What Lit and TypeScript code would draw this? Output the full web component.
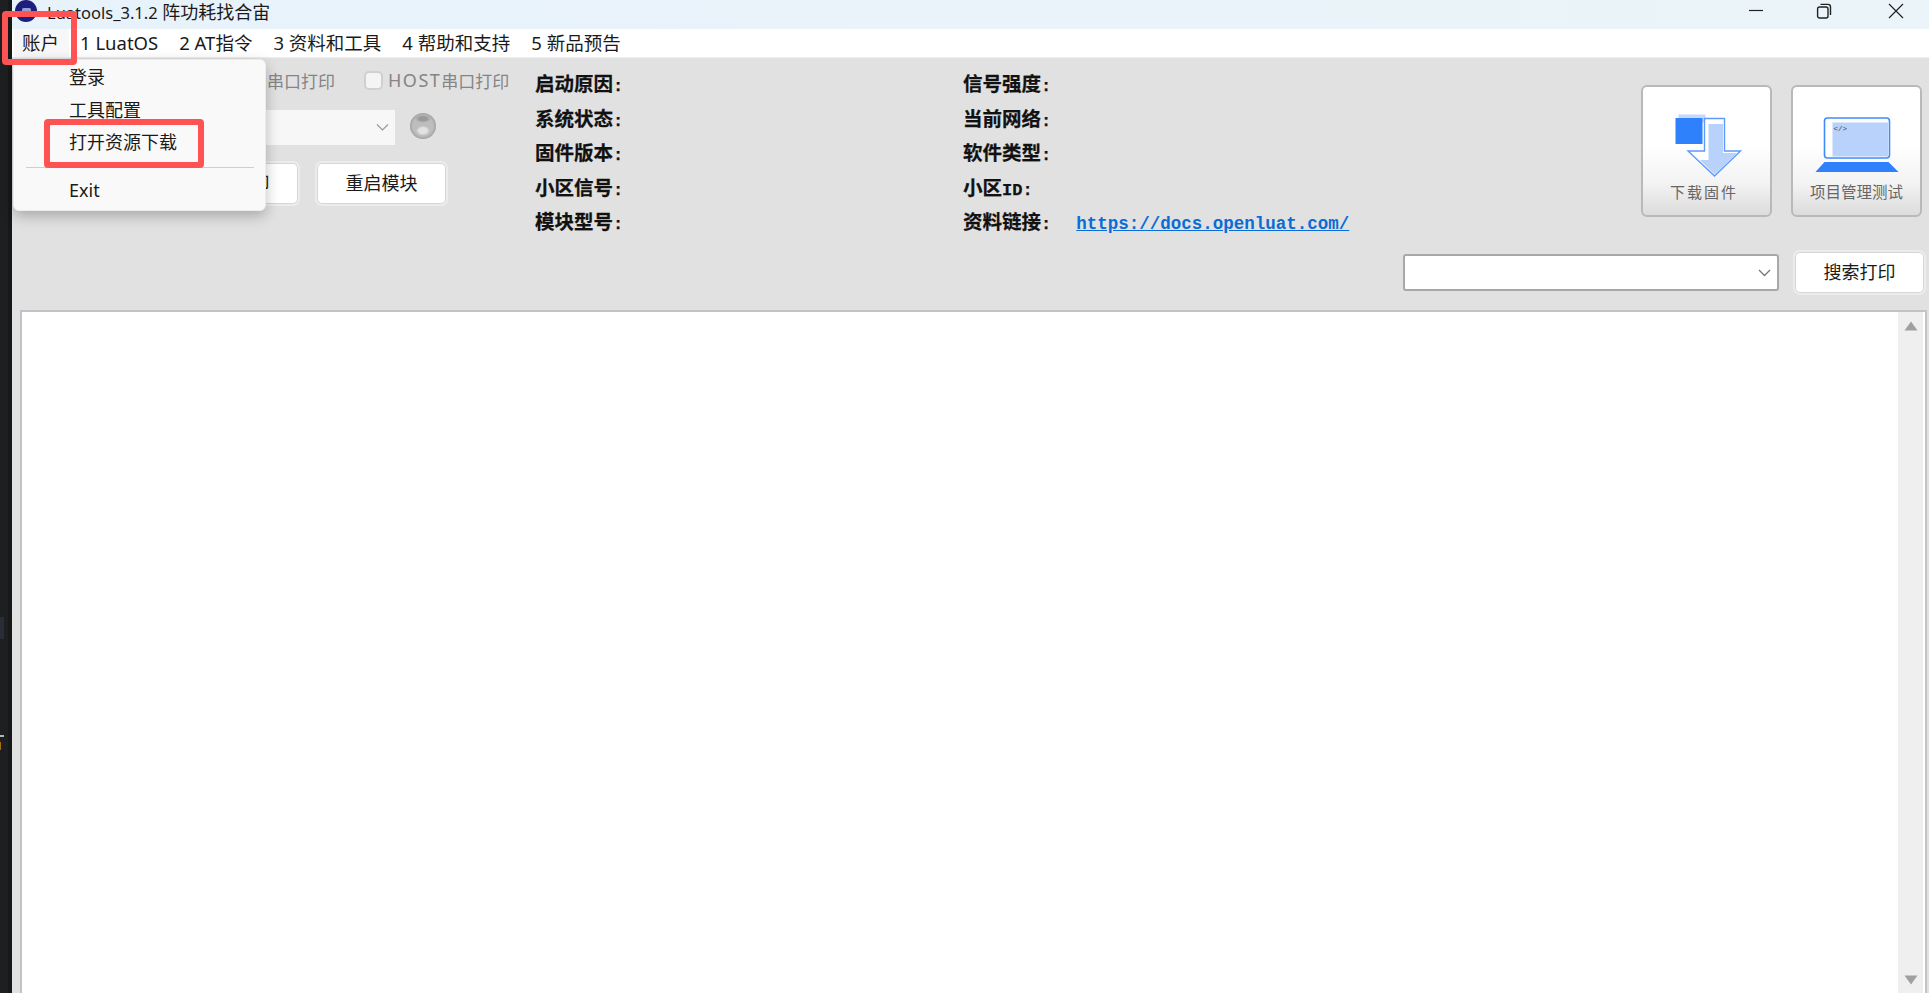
import { LitElement, html, css } from "lit";
import { customElement } from "lit/decorators.js";

const left = [
  ["启动原因", ""], ["系统状态", ""], ["固件版本", ""], ["小区信号", ""], ["模块型号", ""],
];
const right = [
  ["信号强度", ""], ["当前网络", ""], ["软件类型", ""], ["小区", "ID"], ["资料链接", ""],
];

@customElement("app-root")
export class AppRoot extends LitElement {
  static styles = css`
    :host {
      display: flex;
      position: relative;
      width: 1929px;
      height: 993px;
      overflow: hidden;
      font-family: "Noto Sans", "Noto Sans CJK SC", sans-serif;
      color: #1a1a1a;
      background: #e1e1e1;
    }
    .strip { width: 12px; flex: none; background: linear-gradient(90deg, #1e1f21 0 8px, #17181a 8px); }
    .strip div { width: 4px; }
    .s1 { height: 22px; margin-top: 617px; background: #2a2c36; }
    .s2 { height: 2px; margin-top: 96px; background: #b5b5b5; }
    .s3 { height: 8px; margin-top: 5px; width: 1px !important; background: #a86f10; }
    .win { flex: 1; min-width: 0; display: flex; flex-direction: column; }
    .title {
      height: 29px; flex: none; display: flex; align-items: flex-start;
      background: linear-gradient(90deg, #e8f2fb, #ebf4f8);
      font-size: 18px;
    }
    .logo { width: 22px; height: 22px; margin: 0 10px 0 3px; flex: none; }
    .title span { line-height: 24px; white-space: nowrap; }
    .title .ver { font-size: 16.5px; }
    .ctrls { margin-left: auto; padding: 3px 25px 0 0; display: flex; gap: 54px; }
    .ctrls svg { width: 16px; height: 16px; display: block; }
    .ctrls .restore { margin: 0 2px 0 -2px; }
    .menubar {
      height: 28px; flex: none; background: #fff; display: flex; align-items: center; gap: 21px;
      padding-left: 10px; font-size: 18.5px; border-bottom: 1px solid #eee;
    }
    .menubar span { white-space: nowrap; line-height: 28px; }
    .menubar .active { background: #f7f7f7; margin-left: -8px; padding: 0 10px 0 8px; margin-right: -10px; }
    .top { height: 194px; flex: none; display: flex; }
    .controls { width: 523px; flex: none; padding: 13px 0 0 157px; box-sizing: border-box; }
    .checks { display: flex; align-items: center; height: 18px; padding-left: 74px; color: #858585; font-size: 17px; white-space: nowrap; }
    .check { width: 19px; height: 19px; box-sizing: border-box; border: 2px solid #d0d0d0; border-radius: 5px; background: #f4f4f4; margin-right: 5px; flex: none; }
    .checks .gap { width: 29px; flex: none; }
    .host { font-size: 18px; letter-spacing: 1.5px; }
    .port { display: flex; align-items: center; gap: 15px; margin-top: 21px; }
    .portbox { width: 226px; height: 35px; background: #f7f7f7; display: flex; align-items: center; justify-content: flex-end; padding-right: 6px; box-sizing: border-box; }
    .portbox svg { width: 13px; height: 9px; }
    .led {
      width: 26px; height: 26px; border-radius: 50%; box-sizing: border-box; margin-bottom: 4px;
      background:
        radial-gradient(ellipse 7px 5px at 50% 68%, #e2e2e2 0 60%, transparent 100%),
        radial-gradient(ellipse 8px 4px at 50% 22%, #9a9a9a 0 50%, transparent 100%),
        radial-gradient(circle at 50% 50%, #bdbdbd 0 55%, #8e8e8e 82%, #b4b4b4 100%);
    }
    .btns { display: flex; gap: 19px; margin-top: 18px; }
    .btn {
      width: 129px; height: 41px; box-sizing: border-box; flex: none; background: #fff;
      border: 1.5px solid #d6d6d6; border-radius: 5px; outline: 2px solid #ececec; padding-bottom: 4px;
      display: flex; align-items: center; justify-content: center; font-size: 18px; color: #1a1a1a;
    }
    .info {
      width: 1106px; flex: none; padding-top: 11px; box-sizing: border-box;
      display: grid; grid-template-columns: 428px 1fr; grid-auto-flow: column;
      grid-template-rows: repeat(5, 34.5px);
      font: bold 19.5px/34.5px "Liberation Mono", "Noto Sans CJK SC", monospace; color: #111;
      -webkit-text-stroke: 0.25px #111;
    }
    .lat { font-size: 17px; }
    .link { margin-left: 25px; font-size: 17.5px; color: #0a6cd6; text-decoration: underline; -webkit-text-stroke: 0; }
    .big { display: flex; gap: 19px; padding-top: 27px; }
    .bigbtn {
      width: 131px; height: 132px; box-sizing: border-box; border: 2px solid #b9b9b9; border-radius: 6px;
      background: linear-gradient(180deg, #fff 0 45%, #f3f3f3 75%, #dcdcdc 100%);
      display: flex; flex-direction: column; align-items: center; padding-top: 27px;
      color: #666; font-size: 15.5px; line-height: 20px; white-space: nowrap;
    }
    .bigbtn svg { width: 90px; height: 64px; flex: none; display: block; }
    .bigbtn span { margin-top: 4px; }
    .dl span { letter-spacing: 2px; font-size: 15px; margin-right: 5px; }
    .search { height: 41px; flex: none; display: flex; align-items: center; justify-content: flex-end; gap: 16px; padding-right: 5px; }
    .combo {
      width: 376px; height: 37px; box-sizing: border-box; background: #fff; border: 2px solid #a8a8a8; border-radius: 3px;
      display: flex; align-items: center; justify-content: flex-end; padding-right: 6px;
    }
    .combo svg { width: 13px; height: 8px; }
    .log {
      flex: 1; min-height: 0; margin: 17px 2px 0 8px; background: #fff; display: flex; justify-content: flex-end;
      border: 2px solid #c2c2c8; border-bottom: 0;
    }
    .bar { width: 25px; margin-right: 2px; display: flex; flex-direction: column; justify-content: space-between; align-items: center; background: #efefef; }
    .arrow { width: 100%; display: flex; align-items: center; justify-content: center; }
    .up { height: 28px; }
    .down { height: 26px; }
    .arrow svg { width: 14px; height: 10px; }
    .popup {
      position: absolute; left: 13px; top: 59px; width: 253px; height: 152px; box-sizing: border-box;
      background: #f9f9f9; border: 1px solid #ececec; border-radius: 6px; padding: 1px 0 0 55px;
      box-shadow: 0 5px 14px rgba(0, 0, 0, 0.25); font-size: 18px;
    }
    .popup div.item { height: 32.5px; line-height: 32.5px; white-space: nowrap; }
    .popup .sep { height: 1.5px; background: #cfcfcf; margin: 8px 0 6px -43px; width: 228px; }
    .mark { position: absolute; box-sizing: border-box; border: 6px solid #ff5353; border-radius: 4px; }
    .m1 { left: 2px; top: 11px; width: 75px; height: 54px; }
    .m2 { left: 44px; top: 119px; width: 160px; height: 49px; }
  `;

  private info(rows: string[][], linkRow: boolean) {
    return rows.map(
      ([a, b], i) => html`<div>${a}<span class="lat">${b}:</span>${linkRow && i === 4
        ? html`<span class="link">https://docs.openluat.com/</span>`
        : ""}</div>`
    );
  }

  render() {
    return html`
      <div class="strip"><div class="s1"></div><div class="s2"></div><div class="s3"></div></div>
      <div class="win">
        <div class="title">
          <svg class="logo" viewBox="0 0 22 22"><circle cx="11" cy="11" r="11" fill="#1c1f7e"/><rect x="7" y="8" width="9" height="4" rx="1.5" fill="#9aa0d0"/></svg>
          <span><span class="ver">Luatools_3.1.2</span> 阵功耗找合宙</span>
          <div class="ctrls">
            <svg viewBox="0 0 16 16"><path d="M1 7.5h14" stroke="#222" stroke-width="1.2"/></svg>
            <svg class="restore" viewBox="0 0 16 16" fill="none" stroke="#222" stroke-width="1.4"><rect x="1.6" y="4" width="10.4" height="11" rx="2"/><path d="M4.5 1.4h7.5a2.5 2.5 0 0 1 2.5 2.5v8"/></svg>
            <svg viewBox="0 0 16 16"><path d="M1 1l14 14M15 1L1 15" stroke="#222" stroke-width="1.2"/></svg>
          </div>
        </div>
        <div class="menubar">
          <span class="active">账户</span><span>1 LuatOS</span><span>2 AT指令</span><span>3 资料和工具</span><span>4 帮助和支持</span><span>5 新品预告</span>
        </div>
        <div class="top">
          <div class="controls">
            <div class="checks">
              <div class="check"></div>串口打印<div class="gap"></div><div class="check"></div><span class="host">HOST</span>串口打印
            </div>
            <div class="port">
              <div class="portbox"><svg viewBox="0 0 13 9"><path d="M1 1.5l5.5 5.5L12 1.5" fill="none" stroke="#9a9a9a" stroke-width="1.2"/></svg></div>
              <div class="led"></div>
            </div>
            <div class="btns"><div class="btn">停止打印</div><div class="btn">重启模块</div></div>
          </div>
          <div class="info">${this.info(left, false)}${this.info(right, true)}</div>
          <div class="big">
            <div class="bigbtn dl">
              <svg viewBox="0 0 90 64">
                <rect x="16.5" y="0.5" width="27" height="8" fill="#c5d9fc"/>
                <path d="M42.5 4.5H62.5V37H78.5L52.5 62L26 37H42.5Z" fill="#fff" stroke="#5c9bfb" stroke-width="1.4"/>
                <path d="M46.5 10H61V39H75.5L52.5 60.5L38 46H46.5Z" fill="#b8d2fb"/>
                <rect x="13.5" y="4" width="27" height="26" fill="#2f80fb"/>
              </svg>
              <span>下载固件</span>
            </div>
            <div class="bigbtn">
              <svg viewBox="0 0 90 64">
                <rect x="12.5" y="4" width="65" height="40" rx="3" fill="#fff" stroke="#3f8bfb" stroke-width="1.6"/>
                <rect x="20.5" y="8.5" width="55.5" height="34" fill="#b8d2fb"/>
                <text x="21.5" y="17" font-size="7.5" font-family="Liberation Mono" fill="#444">&lt;/&gt;</text>
                <path d="M12.5 48H76.5L86.5 58H3.5Z" fill="#2f80fb"/>
              </svg>
              <span>项目管理测试</span>
            </div>
          </div>
        </div>
        <div class="search">
          <div class="combo"><svg viewBox="0 0 13 8"><path d="M1 1l5.5 5.5L12 1" fill="none" stroke="#777" stroke-width="1.3"/></svg></div>
          <div class="btn">搜索打印</div>
        </div>
        <div class="log">
          <div class="bar">
            <div class="arrow up"><svg viewBox="0 0 14 10"><path d="M7 0.5L13.5 9.5H0.5Z" fill="#a0a0a0"/></svg></div>
            <div class="arrow down"><svg viewBox="0 0 14 10"><path d="M7 9.5L13.5 0.5H0.5Z" fill="#a0a0a0"/></svg></div>
          </div>
        </div>
      </div>
      <div class="popup">
        <div class="item">登录</div>
        <div class="item">工具配置</div>
        <div class="item">打开资源下载</div>
        <div class="sep"></div>
        <div class="item">Exit</div>
      </div>
      <div class="mark m1"></div>
      <div class="mark m2"></div>
    `;
  }
}
